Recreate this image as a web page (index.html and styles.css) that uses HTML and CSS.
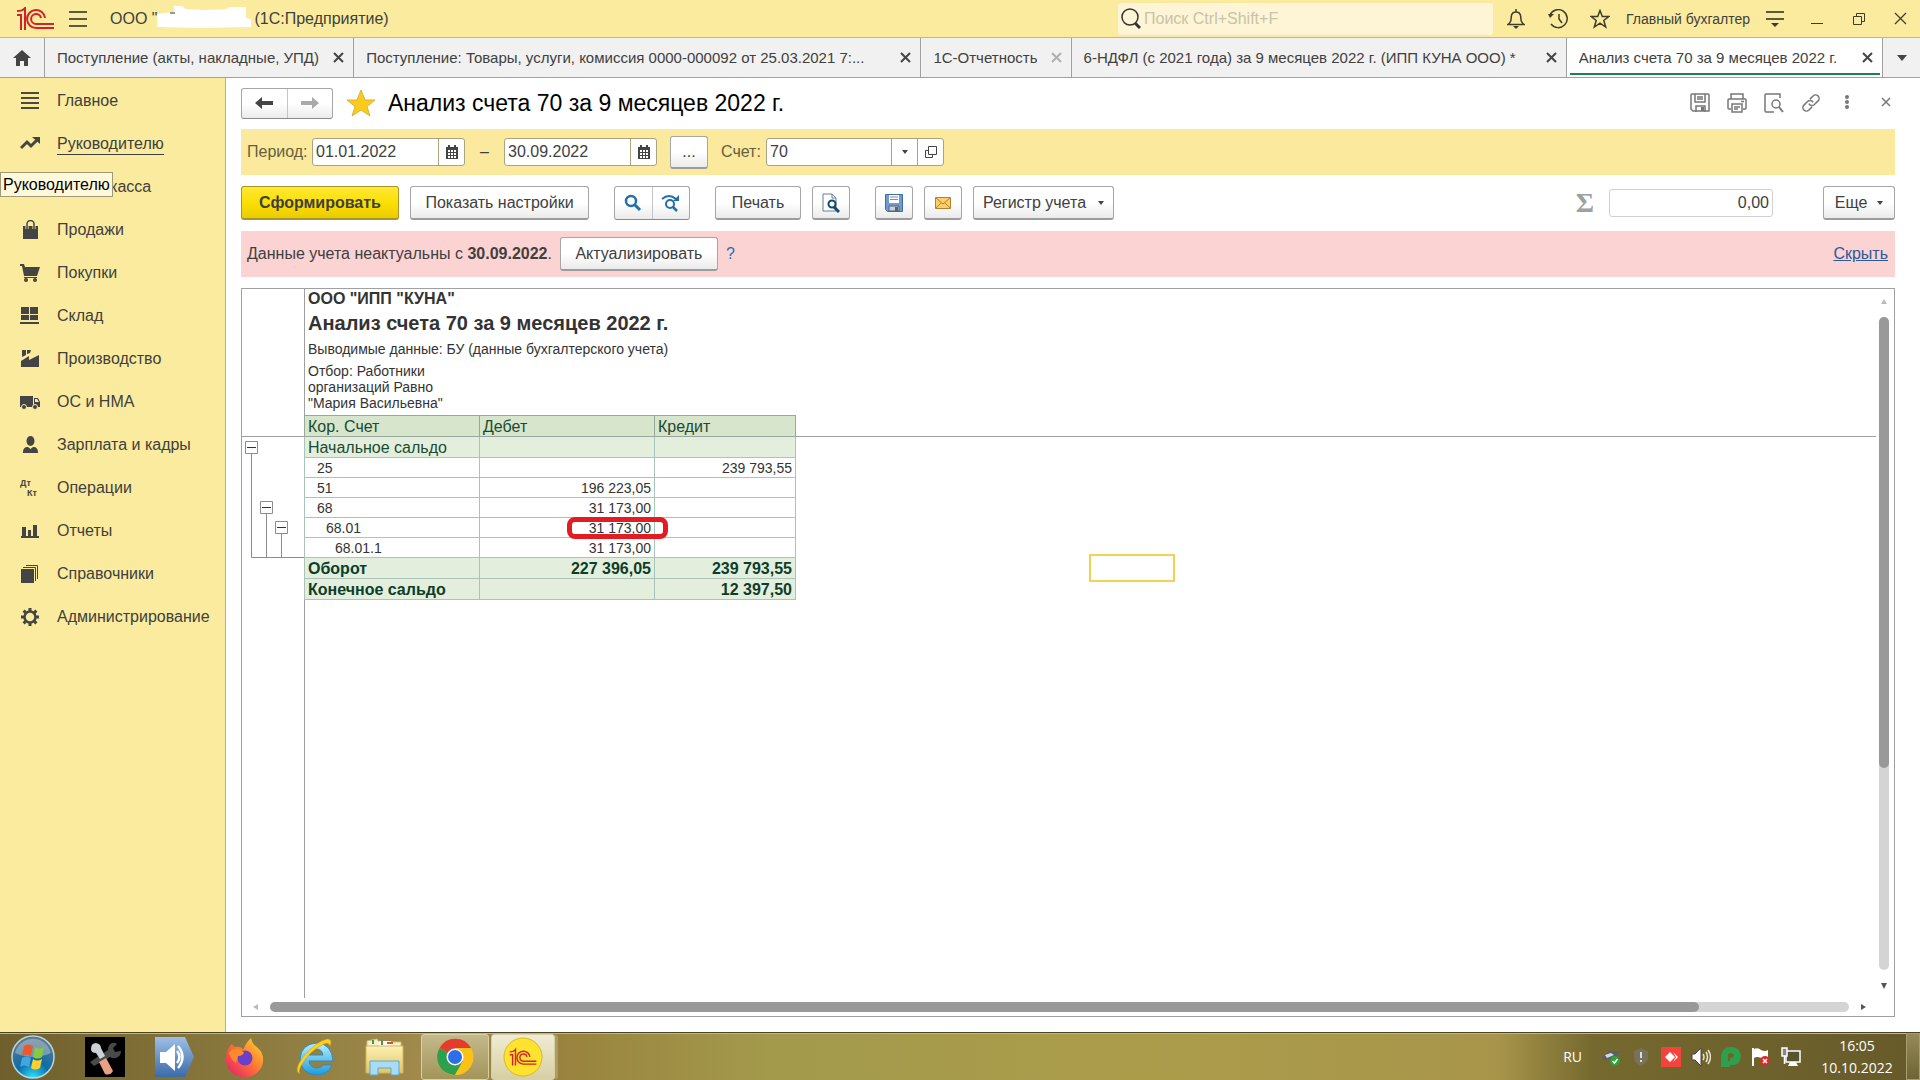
FILE: index.html
```html
<!DOCTYPE html>
<html lang="ru">
<head>
<meta charset="utf-8">
<title>Анализ счета 70 за 9 месяцев 2022 г.</title>
<link rel="stylesheet" href="styles.css">
</head>
<body>
<svg class="defs" aria-hidden="true">
  <defs>
    <g id="logo-1c">
      <path d="M1 8h4v15M1 4q6 0 8-3v22" fill="none" stroke="#d2232a" stroke-width="2"/>
      <path d="M29 11A9 9 0 1 0 20 21H38M25 11A5 5 0 1 0 20 17H38" fill="none" stroke="#d2232a" stroke-width="2"/>
    </g>
    <g id="calendar" fill="#444">
      <path d="M1 2h12v12H1z"/><path d="M3 0h2v3H3zM9 0h2v3H9z"/>
      <path d="M3 5h2v2H3zM6 5h2v2H6zM9 5h2v2H9zM3 8h2v2H3zM6 8h2v2H6zM9 8h2v2H9zM3 11h2v2H3zM6 11h2v2H6zM9 11h2v2H9z" fill="#fff"/>
    </g>
    <path id="cross" d="M1 1l9 9M10 1l-9 9" fill="none"/>
    <linearGradient id="blue" x1="0" y1="0" x2="0" y2="1"><stop offset="0" stop-color="#9dbfe6"/><stop offset="1" stop-color="#3b6ba8"/></linearGradient>
    <radialGradient id="orb" cx=".5" cy="1" r=".9"><stop offset="0" stop-color="#2fe6ff"/><stop offset=".45" stop-color="#0b6da8"/><stop offset="1" stop-color="#5a7890"/></radialGradient>
    <linearGradient id="fox" x1="1" y1="0" x2="0" y2="1"><stop offset="0" stop-color="#ffe226"/><stop offset=".5" stop-color="#ff7139"/><stop offset="1" stop-color="#e3156d"/></linearGradient>
    <linearGradient id="ie" x1="0" y1="0" x2="0" y2="1"><stop offset="0" stop-color="#b9efff"/><stop offset="1" stop-color="#1d9bdc"/></linearGradient>
    <linearGradient id="folder" x1="0" y1="0" x2="0" y2="1"><stop offset="0" stop-color="#fbf0b4"/><stop offset="1" stop-color="#e3c667"/></linearGradient>
  </defs>
</svg>

<header class="titlebar">
  <svg class="logo" width="38" height="24" viewBox="0 0 38 24"><use href="#logo-1c"/></svg>
  <button class="plain burger" aria-label="Меню"><svg width="18" height="16" viewBox="0 0 18 16"><path d="M0 1h18M0 8h18M0 15h18" stroke="#5c5842" stroke-width="2"/></svg></button>
  <span class="org">ООО "</span>
  <svg class="redacted" width="94" height="22" viewBox="0 0 94 22"><path d="M0 8 17 6V0h8l4 3 20 1 20-1 4-2h16v11l5 1v8l-50 1-44-1z" fill="#fff"/><path d="M13 7h5" stroke="#333" stroke-width="1"/></svg>
  <span class="app">(1С:Предприятие)</span>
  <label class="search">
    <svg width="20" height="22" viewBox="0 0 20 22"><circle cx="9" cy="9" r="8" fill="none" stroke="#333" stroke-width="1.500"/><path d="M14 15l5 5" stroke="#333" stroke-width="3"/></svg>
    <input type="text" placeholder="Поиск Ctrl+Shift+F" aria-label="Поиск">
  </label>
  <button class="plain tb-icon" aria-label="Уведомления"><svg width="18" height="20" viewBox="0 0 18 20"><path d="M1 15.500h16c-3-2.500-3-4-3.300-8C13.400 4 11.500 3 9 3S4.600 4 4.300 7.500C4 11.500 4 13 1 15.500zM9 0v3" fill="none" stroke="#3f3c2c" stroke-width="1.500"/><path d="M6 17h6l-3 3z" fill="#3f3c2c"/></svg></button>
  <button class="plain tb-icon" aria-label="История"><svg width="20" height="20" viewBox="0 0 20 20"><path d="M2 6a9 9 0 1 1 1 9M11 5v5l3 4" fill="none" stroke="#3f3c2c" stroke-width="1.500"/><path d="M0 5l6 0-4 4z" fill="#3f3c2c"/></svg></button>
  <button class="plain tb-icon" aria-label="Избранное"><svg width="20" height="20" viewBox="0 0 20 20"><path d="M10 1.500l2.300 6h6.500l-5 4 1.900 6.500-5.700-3.800L4.300 18l1.900-6.500-5-4h6.500z" fill="none" stroke="#3f3c2c" stroke-width="1.500"/></svg></button>
  <span class="user">Главный бухгалтер</span>
  <button class="plain tb-menu" aria-label="Сервис"><svg width="18" height="18" viewBox="0 0 18 18"><path d="M0 2h18M0 9h18" stroke="#5c5842" stroke-width="2"/><path d="M5 13h8l-4 4z" fill="#3f3c2c"/></svg></button>
  <button class="plain tb-win" aria-label="Свернуть"><svg width="12" height="12" viewBox="0 0 12 12"><path d="M0 10.500h12" stroke="#3f3c2c" stroke-width="1"/></svg></button>
  <button class="plain tb-win" aria-label="Развернуть"><svg width="12" height="12" viewBox="0 0 12 12"><path d="M.500 3.500h8v8h-8zM3.500 3V.500h8v8H9" fill="none" stroke="#3f3c2c" stroke-width="1"/></svg></button>
  <button class="plain tb-win" aria-label="Закрыть"><svg width="13" height="13" viewBox="0 0 13 13"><path d="M1 1l11 11M12 1L1 12" stroke="#3f3c2c" stroke-width="1.200"/></svg></button>
</header>

<nav class="tabs">
  <a class="tab home" href="#" aria-label="Начальная страница"><svg width="18" height="16" viewBox="0 0 18 16"><path d="M9 0l9 8h-3v8h-4v-5H7v5H3V8H0z" fill="#444"/></svg></a>
  <div class="tab tab-a"><a href="#">Поступление (акты, накладные, УПД)</a><button class="plain close" aria-label="Закрыть вкладку"><svg width="11" height="11"><use href="#cross"/></svg></button></div>
  <div class="tab tab-b"><a href="#">Поступление: Товары, услуги, комиссия 0000-000092 от 25.03.2021 7:...</a><button class="plain close" aria-label="Закрыть вкладку"><svg width="11" height="11"><use href="#cross"/></svg></button></div>
  <div class="tab tab-c"><a href="#">1С-Отчетность</a><button class="plain close dim" aria-label="Закрыть вкладку"><svg width="11" height="11"><use href="#cross"/></svg></button></div>
  <div class="tab tab-d"><a href="#">6-НДФЛ (с 2021 года) за 9 месяцев 2022 г. (ИПП КУНА ООО) *</a><button class="plain close" aria-label="Закрыть вкладку"><svg width="11" height="11"><use href="#cross"/></svg></button></div>
  <div class="tab tab-e active"><a href="#">Анализ счета 70 за 9 месяцев 2022 г.</a><button class="plain close" aria-label="Закрыть вкладку"><svg width="11" height="11"><use href="#cross"/></svg></button></div>
  <button class="plain more-tabs" aria-label="Все вкладки"><svg width="10" height="6"><path d="M0 0h10L5 6z" fill="#444"/></svg></button>
</nav>

<div class="workspace">
  <nav class="sidebar">
    <a href="#"><svg viewBox="0 0 20 20"><path d="M1 2h18M1 7h18M1 12h18M1 17h18" stroke="#4b4a3c" stroke-width="2"/></svg><span>Главное</span></a>
    <a href="#" class="hover"><svg viewBox="0 0 20 20"><path d="M1 14l6-6 4 4 6-6" fill="none" stroke="#444" stroke-width="3"/><path d="M12 3h8v7z" fill="#444"/></svg><span>Руководителю</span></a>
    <a href="#"><svg viewBox="0 0 20 20"><path d="M2 3h16v4H2zM2 9h16v8H2z" fill="#444"/></svg><span>Банк и касса</span></a>
    <a href="#"><svg viewBox="0 0 20 20"><path d="M3 6h15v13H3z" fill="#444"/><path d="M7 9V5a3 3 0 0 1 7 0v4" fill="none" stroke="#faeb9e" stroke-width="3"/><path d="M7 9V4a3 3 0 0 1 7 0v5" fill="none" stroke="#444" stroke-width="1.500"/></svg><span>Продажи</span></a>
    <a href="#"><svg viewBox="0 0 20 20"><path d="M0 1h4l1 3h15l-3 9H4L2 3H0zM4 14h13v1H4z" fill="#444"/><circle cx="6" cy="17" r="2" fill="#444"/><circle cx="15" cy="17" r="2" fill="#444"/></svg><span>Покупки</span></a>
    <a href="#"><svg viewBox="0 0 20 20"><path d="M1 1h8v7H1zM10 1h8v7h-8zM1 9h8v5H1zM10 9h8v5h-8zM0 16h19v2H0z" fill="#444"/></svg><span>Склад</span></a>
    <a href="#"><svg viewBox="0 0 20 20"><path d="M1 18v-6l8-5v4l10-5v12zM2 1h4v5L2 8zM7 1h4l-1 3-3 1z" fill="#444"/></svg><span>Производство</span></a>
    <a href="#"><svg viewBox="0 0 20 20"><path d="M0 4h13v11H0zM14 6h4l2 4v5h-6z" fill="#444"/><path d="M15 7h2l2 3h-4z" fill="#faeb9e"/><g fill="#444" stroke="#faeb9e"><circle cx="4" cy="15" r="2.500"/><circle cx="15" cy="15" r="2.500"/></g></svg><span>ОС и НМА</span></a>
    <a href="#"><svg viewBox="0 0 20 20"><ellipse cx="10.500" cy="6" rx="4" ry="5" fill="#444"/><path d="M3 18c0-5 2-6 5-6l2.500 2 2.500-2c3 0 5 1 5 6z" fill="#444"/></svg><span>Зарплата и кадры</span></a>
    <a href="#"><svg viewBox="0 0 20 20"><text x="0" y="8" class="dk">Дт</text><text x="7" y="18" class="dk">Кт</text></svg><span>Операции</span></a>
    <a href="#"><svg viewBox="0 0 20 20"><path d="M2 6h4v9H2zM8 9h3v6H8zM13 4h4v11h-4zM1 15h18v2H1z" fill="#444"/></svg><span>Отчеты</span></a>
    <a href="#"><svg viewBox="0 0 20 20"><path d="M1 5h13v14H1z" fill="#444"/><path d="M3 3.500h12.500V17M6 1.500h11.500V15" fill="none" stroke="#444"/></svg><span>Справочники</span></a>
    <a href="#"><svg viewBox="0 0 20 20"><circle cx="10" cy="10" r="5.500" fill="none" stroke="#444" stroke-width="2.500"/><path d="M10 1v3M10 16v3M1 10h3M16 10h3M3.600 3.600l2 2M14.400 14.400l2 2M3.600 16.400l2-2M14.400 5.600l2-2" stroke="#444" stroke-width="3"/></svg><span>Администрирование</span></a>
    <div class="tooltip" role="tooltip">Руководителю</div>
  </nav>

  <main class="form">
    <div class="form-head">
      <div class="pair">
        <button aria-label="Назад"><svg width="18" height="14" viewBox="0 0 18 14"><path d="M0 7l7-6v4h11v4H7v4z" fill="#444"/></svg></button>
        <button aria-label="Вперед"><svg width="18" height="14" viewBox="0 0 18 14"><path d="M18 7l-7-6v4H0v4h11v4z" fill="#aaa"/></svg></button>
      </div>
      <svg class="fav" width="30" height="28" viewBox="0 0 30 28"><path d="M15 1l4 10h10l-8 6.500L24 27l-9-6-9 6 3-9.500L1 11h10z" fill="#fbcb1c" stroke="#d9b43c"/></svg>
      <h1>Анализ счета 70 за 9 месяцев 2022 г.</h1>
      <div class="head-tools">
        <button class="plain" aria-label="Сохранить"><svg width="20" height="20" viewBox="0 0 20 20"><path d="M1 2q0-1 1-1h16q1 0 1 1v16H3l-2-2zM5 1v8h10V1M6 19v-6h9v6M7 4h6M7 6h6" fill="none" stroke="#777" stroke-width="1.500"/><path d="M11 14h3v4h-3z" fill="#777"/></svg></button>
        <button class="plain" aria-label="Печать"><svg width="20" height="20" viewBox="0 0 20 20"><path d="M4 6V1h12v5M4 16H2q-1 0-1-1V7q0-1 1-1h16q1 0 1 1v8q0 1-1 1h-2M5 11h10v8H5zM7 14h6M7 16h4M14 8.500h3" fill="none" stroke="#777" stroke-width="1.500"/></svg></button>
        <button class="plain" aria-label="Просмотр"><svg width="20" height="20" viewBox="0 0 20 20"><path d="M16 5V1H2Q1 1 1 2v16q0 1 1 1h8" fill="none" stroke="#777" stroke-width="1.500"/><circle cx="12" cy="11" r="4" fill="none" stroke="#777" stroke-width="1.500"/><path d="M15 14l4 5" stroke="#777" stroke-width="2"/></svg></button>
        <button class="plain" aria-label="Ссылка"><svg width="20" height="20" viewBox="0 0 20 20"><g transform="rotate(-45 10 10)" fill="none" stroke="#777" stroke-width="1.500"><path d="M8 13.500H3.500a3.500 3.500 0 0 1 0-7H9a3.500 3.500 0 0 1 3 4.500"/><path d="M12 6.500h4.500a3.500 3.500 0 0 1 0 7H11A3.500 3.500 0 0 1 8 9"/></g></svg></button>
        <button class="plain" aria-label="Дополнительно"><svg width="20" height="20" viewBox="0 0 20 20"><g fill="#777"><circle cx="9" cy="4" r="2"/><circle cx="9" cy="9" r="2"/><circle cx="9" cy="14" r="2"/></g></svg></button>
        <button class="plain" aria-label="Закрыть"><svg width="20" height="20" viewBox="0 0 20 20"><path d="M7 5l8 8M15 5l-8 8" stroke="#777" stroke-width="1.500"/></svg></button>
      </div>
    </div>

    <div class="period">
      <label for="from">Период:</label>
      <div class="field date"><input id="from" type="text" value="01.01.2022"><button class="plain" aria-label="Выбрать дату"><svg width="14" height="14"><use href="#calendar"/></svg></button></div>
      <span class="dash">–</span>
      <div class="field date"><input type="text" value="30.09.2022" aria-label="Конец периода"><button class="plain" aria-label="Выбрать дату"><svg width="14" height="14"><use href="#calendar"/></svg></button></div>
      <button class="btn dots">...</button>
      <label for="account">Счет:</label>
      <div class="field account"><input id="account" type="text" value="70"><button class="plain" aria-label="Список"><svg width="6" height="4"><path d="M0 0h6L3 4z" fill="#444"/></svg></button><button class="plain" aria-label="Открыть"><svg width="12" height="12" viewBox="0 0 12 12"><path d="M3.500.500h8v8h-8zM3.500 4.500h-3v7h7v-3" fill="none" stroke="#444"/></svg></button></div>
    </div>

    <div class="toolbar">
      <button class="btn primary">Сформировать</button>
      <button class="btn settings">Показать настройки</button>
      <div class="pair tall">
        <button aria-label="Найти"><svg width="18" height="18" viewBox="0 0 18 18"><circle cx="7" cy="7" r="5" fill="none" stroke="#2470a8" stroke-width="2.500"/><path d="M11 11l5 5" stroke="#2470a8" stroke-width="3"/></svg></button>
        <button aria-label="Найти далее"><svg width="20" height="20" viewBox="0 0 20 20"><circle cx="9" cy="11" r="4" fill="none" stroke="#2470a8" stroke-width="2"/><path d="M12 14l4 4" stroke="#2470a8" stroke-width="2.500"/><path d="M1 6q7-6 14 0" fill="none" stroke="#2470a8" stroke-width="2"/><path d="M18 2v6h-6z" fill="#2470a8"/></svg></button>
      </div>
      <button class="btn print">Печать</button>
      <button class="btn icon preview" aria-label="Предварительный просмотр"><svg width="18" height="20" viewBox="0 0 18 20"><path d="M1 1h9l4 4v13H1zM10 1v4h4" fill="#fff" stroke="#6b7f94"/><circle cx="10" cy="11" r="3.500" fill="#fff" stroke="#0f4a78" stroke-width="2"/><path d="M12 14l5 5" stroke="#0f4a78" stroke-width="3"/></svg></button>
      <button class="btn icon save" aria-label="Сохранить отчет"><svg width="18" height="18" viewBox="0 0 18 18"><path d="M.500.500h17v17h-15l-2-2z" fill="#6f9bd0" stroke="#3d6ea8"/><path d="M4 1h10v8H4z" fill="#fff"/><path d="M5 3h8M5 5.500h8" stroke="#88a"/><path d="M4 12h10v5H4z" fill="#c9cfd6" stroke="#52657a"/><path d="M10 13h3v4h-3z" fill="#52657a"/></svg></button>
      <button class="btn icon mail" aria-label="Отправить"><svg width="16" height="12" viewBox="0 0 16 12"><path d="M.500.500h15v11H.500z" fill="#fbcf6b" stroke="#b8802a"/><path d="M1 1l7 6 7-6M1 11l5-5M15 11l-5-5" fill="none" stroke="#b8802a"/></svg></button>
      <button class="btn register">Регистр учета<svg width="6" height="4"><path d="M0 0h6L3 4z" fill="#444"/></svg></button>
      <label class="sum" for="sum">Σ</label>
      <input class="sum-value" id="sum" type="text" value="0,00">
      <button class="btn else">Еще<svg width="6" height="4"><path d="M0 0h6L3 4z" fill="#444"/></svg></button>
    </div>

    <div class="notice">
      <span>Данные учета неактуальны с <b>30.09.2022</b>.</span>
      <button class="btn">Актуализировать</button>
      <a class="help" href="#">?</a>
      <a class="hide" href="#">Скрыть</a>
    </div>

    <section class="sheet">
      <div class="view">
        <div class="grid">
          <div class="gutter-top"></div>
          <div class="gutter">
            <svg width="62" height="122" viewBox="0 0 62 122"><g fill="none" stroke="#8c8c8c"><path d="M9.500 16v104.500H62M24.500 77v43M39.500 97v23"/><path d="M3.500 4.500h12v12h-12zM18.500 64.500h12v12h-12zM33.500 84.500h12v12h-12z" fill="#fff"/></g><path d="M5 10.500h9M20 70.500h9M35 90.500h9" stroke="#333"/></svg>
          </div>
          <div class="report">
            <div class="report-head">
              <div class="company">ООО "ИПП "КУНА"</div>
              <h2>Анализ счета 70 за 9 месяцев 2022 г.</h2>
              <p>Выводимые данные: БУ (данные бухгалтерского учета)</p>
              <p class="filter">Отбор: Работники организаций Равно "Мария Васильевна"</p>
            </div>
            <table>
              <thead><tr><th class="c1">Кор. Счет</th><th class="c2">Дебет</th><th class="c3">Кредит</th></tr></thead>
              <tbody>
                <tr class="group"><td>Начальное сальдо</td><td></td><td></td></tr>
                <tr><td class="l1">25</td><td></td><td>239 793,55</td></tr>
                <tr><td class="l1">51</td><td>196 223,05</td><td></td></tr>
                <tr><td class="l1">68</td><td>31 173,00</td><td></td></tr>
                <tr><td class="l2">68.01</td><td class="marked">31 173,00<i class="mark"></i></td><td></td></tr>
                <tr><td class="l3">68.01.1</td><td>31 173,00</td><td></td></tr>
              </tbody>
              <tfoot>
                <tr class="total"><td>Оборот</td><td>227 396,05</td><td>239 793,55</td></tr>
                <tr class="total"><td>Конечное сальдо</td><td></td><td>12 397,50</td></tr>
              </tfoot>
            </table>
          </div>
          <div class="rest-top"></div>
          <i class="cursor"></i>
        </div>
        <div class="vscroll">
          <svg width="6" height="5"><path d="M0 5h6L3 0z" fill="#bbb"/></svg>
          <div class="track"><div class="thumb"></div></div>
          <svg width="6" height="6"><path d="M0 0h6L3 6z" fill="#555"/></svg>
        </div>
      </div>
      <div class="hscroll">
        <svg width="5" height="6"><path d="M5 0v6L0 3z" fill="#bbb"/></svg>
        <div class="track"><div class="thumb"></div></div>
        <svg width="5" height="6"><path d="M0 0v6l5-3z" fill="#555"/></svg>
      </div>
    </section>
  </main>
</div>

<footer class="taskbar">
  <button class="plain start" aria-label="Пуск"><svg width="44" height="44" viewBox="0 0 44 44"><circle cx="22" cy="22" r="21" fill="url(#orb)" stroke="#b8d4e0" stroke-width="1.500"/><path d="M4 18a18.500 18.500 0 0 1 36 0q-18 8-36 0z" fill="#fff" opacity=".3"/><path d="M13 11q4-3 9 0l-2 10q-4-3-9 0z" fill="#f0562a"/><path d="M24 12q4 3 9 0l-2 10q-5 3-9 0z" fill="#8cc83c"/><path d="M11 23q4-3 9 0l-2 9q-5-3-9 0z" fill="#42a5e0"/><path d="M22 24q4 3 9 0l-2 9q-5 3-9 0z" fill="#fcd12e"/></svg></button>
  <button class="plain app-icon" aria-label="Инструменты"><svg width="40" height="40" viewBox="0 0 40 40"><path d="M0 0h40v40H0z" fill="#000"/><path d="M5 25l18-12c0-6 5-9 9-6l-4 4 2 4 6-1c0 6-6 9-11 6L9 29z" fill="#4a4a4a"/><path d="M6 12q0-6 5-6 5 1 5 5l4 8-5 3-4-6q-5 0-5-4z" fill="#cdd0d4"/><path d="M14 25l7-4 7 13q-3 5-8 3z" fill="#e8a184"/></svg></button>
  <button class="plain app-icon" aria-label="Звук"><svg width="40" height="40" viewBox="0 0 40 40"><path d="M0 0h30l9 20-9 20H0z" fill="url(#blue)"/><path d="M5 15h6l9-8v27l-9-8H5z" fill="#fff"/><path d="M22 14q5 6 0 12M23 9q9 11 0 22" fill="none" stroke="#fff" stroke-width="2.500"/></svg></button>
  <button class="plain app-icon" aria-label="Firefox"><svg width="40" height="40" viewBox="0 0 40 40"><path d="M1 20Q2 11 7 7q1 3 3 3 6-1 8 3 4-9 8-12 1 6 7 10 6 6 5 13a18 16 0 0 1-37-1z" fill="url(#fox)"/><circle cx="20" cy="21" r="7.500" fill="#6b3fc8"/><path d="M4 16q4-6 10-3l5 2q-1 4-6 4l-2 7q-5-3-7-10z" fill="#ff8a2a"/></svg></button>
  <button class="plain app-icon" aria-label="Internet Explorer"><svg width="40" height="40" viewBox="0 0 40 40"><path d="M38 24H14q1 7 8 7 4 0 6-3h9q-4 10-15 10Q6 37 5 22 6 7 22 6q15 1 16 18zM14 18h14q-1-6-7-6-6 1-7 6z" fill="url(#ie)" stroke="#2a8cc4"/><path d="M5 37Q-2 34 8 20 20 5 32 2q6 0 3 7-1-4-6-2Q14 14 6 29q-3 6-1 8z" fill="#fad122" stroke="#c89a18" stroke-width=".500"/></svg></button>
  <button class="plain app-icon" aria-label="Проводник"><svg width="40" height="40" viewBox="0 0 40 40"><path d="M2 4l10-2 2 3h22v6H2z" fill="#f7efca" stroke="#d4bd6a"/><path d="M14 4h12v5H14z" fill="#fff"/><path d="M7 3h2v4H7zM16 4h2v4h-2z" fill="#3a9a5a"/><path d="M22 5h6v2h-6z" fill="#d8542a"/><path d="M1 9h37v27H1z" fill="url(#folder)" stroke="#d4b45a"/><path d="M5 38V24h29v14h-8v-7H13v7z" fill="#a9dcf2" stroke="#5aa8d4"/></svg></button>
  <button class="plain running" aria-label="Chrome"><svg width="40" height="40" viewBox="0 0 40 40"><circle cx="20" cy="20" r="18" fill="#fbc116"/><path d="M20 20L4.500 11A18 18 0 0 1 36 11H20z" fill="#e33b2e"/><path d="M4.500 11A18 18 0 0 0 20 38l8-14-8-4z" fill="#2da04e"/><path d="M20 11h16A18 18 0 0 1 20 38l8-14z" fill="#fbc116"/><circle cx="20" cy="20" r="8.500" fill="#fff"/><circle cx="20" cy="20" r="7" fill="#2c6fe8"/></svg></button>
  <button class="plain running current" aria-label="1С:Предприятие"><svg width="40" height="40" viewBox="0 0 40 40"><circle cx="20" cy="20" r="19" fill="#ffe32e" stroke="#d8b820"/><g transform="translate(6 12) scale(.720)"><use href="#logo-1c"/></g></svg></button>
  <div class="tray">
    <span class="lang">RU</span>
    <svg width="20" height="20" viewBox="0 0 20 20"><path d="M1 11L9 4l10 0-6 7-10 2z" fill="#59606c"/><path d="M4 8l6-2 3 2-7 3z" fill="#d4dae4"/><circle cx="14" cy="14" r="5" fill="#2fa03a"/><path d="M11.500 14l2 2 3-4" fill="none" stroke="#fff" stroke-width="1.500"/></svg>
    <svg width="20" height="20" viewBox="0 0 20 20"><path d="M10 1l7 3v6q0 6-7 9-7-3-7-9V4z" fill="#77735a"/><path d="M9 5h2v6H9zM9 13h2v2H9z" fill="#ddd"/></svg>
    <svg width="20" height="20" viewBox="0 0 20 20"><path d="M0 0h20v20H0z" fill="#f4433a"/><path d="M4 10l5-5 5 5-5 5zM12 5l5 5-5 5 3-5z" fill="#fff"/></svg>
    <svg width="20" height="20" viewBox="0 0 20 20"><path d="M1 7h3l6-6v18l-6-6H1z" fill="#fff" stroke="#444"/><path d="M12 7q2 3 0 6M15 5q3 5 0 10M17 3q5 7 0 14" fill="none" stroke="#e8e4cc" stroke-width="1.500"/></svg>
    <svg width="20" height="20" viewBox="0 0 20 20"><path d="M0 20V9Q1 0 10 0t10 9q-1 9-8 9H9v2zM7 7v7h2v-3q4 0 4-3-1-3-6-1z" fill="#2fa04a" fill-rule="evenodd"/></svg>
    <svg width="20" height="20" viewBox="0 0 20 20"><path d="M2 1v18" stroke="#fff" stroke-width="2"/><path d="M3 2q4-2 7 1 4 2 7 0v9q-4 2-7-1-4-2-7 0z" fill="#fff"/><circle cx="14" cy="14" r="5" fill="#d82a2a"/><path d="M12 12l4 4M16 12l-4 4" stroke="#fff" stroke-width="1.500"/></svg>
    <svg width="20" height="20" viewBox="0 0 20 20"><path d="M5 4h14v11H5z" fill="#56542f" stroke="#fff" stroke-width="1.500"/><path d="M9 15h6l2 4H7z" fill="#fff"/><path d="M1 1h5v8H1zM3.500 9v8" fill="#888" stroke="#fff" stroke-width="1.500"/></svg>
    <div class="clock"><span>16:05</span><span>10.10.2022</span></div>
  </div>
  <button class="plain desktop" aria-label="Показать рабочий стол"></button>
</footer>
</body>
</html>
```
FILE: styles.css
```css
* { box-sizing: border-box; }

body {
  margin: 0;
  min-height: 100vh;
  display: flex;
  flex-direction: column;
  font: 16px/20px "Liberation Sans", Arial, sans-serif;
  color: #404040;
  background: #fff;
}

button, input { font: inherit; color: inherit; margin: 0; }
a { color: inherit; text-decoration: none; }
h1, h2, p { margin: 0; }
svg { flex: none; display: block; }
.defs { position: absolute; width: 0; height: 0; }
.plain {
  padding: 0;
  border: 0;
  background: none;
  display: flex;
  align-items: center;
  justify-content: center;
}

/* title bar */
.titlebar {
  display: flex;
  align-items: center;
  height: 38px;
  padding-left: 16px;
  background: #faeb9e;
  border-bottom: 1px solid #c9b96c;
}
.burger { margin: 0 23px 0 15px; }
.redacted { margin: 0 3px 4px 0; }
.search {
  display: flex;
  align-items: center;
  width: 375px;
  height: 32px;
  margin-left: auto;
  padding-left: 3px;
  gap: 3px;
  background: #fdf5d5;
  border-radius: 3px;
}
.search input { flex: 1; min-width: 0; padding: 0; border: 0; background: none; outline: 0; }
.search input::placeholder { color: #c9c3a8; opacity: 1; }
.tb-icon { width: 42px; }
.search + .tb-icon { margin-left: 2px; }
.user { margin-left: 5px; font-size: 14px; }
.tb-menu { margin: 0 12px 0 16px; }
.tb-win { width: 42px; }
.tb-win:last-child { width: 40px; }

/* open window tabs */
.tabs {
  display: flex;
  height: 40px;
  font-size: 15px;
  background: #f1f1f1;
  border-bottom: 1px solid #a0a0a0;
}
.tab {
  display: flex;
  align-items: center;
  justify-content: space-between;
  min-width: 0;
  padding: 0 9px 0 12px;
  border-right: 1px solid #a0a0a0;
}
.tab a { overflow: hidden; white-space: nowrap; }
.tab.home { width: 45px; flex: none; padding: 0; justify-content: center; }
.tab-a { flex: 1 1 309px; }
.tab-b { flex: 1 1 567px; }
.tab-c { flex: 1 1 150px; }
.tab-d { flex: 1 1 495px; }
.tab-e { flex: 1 1 316px; }
.tab.active { position: relative; background: #fff; }
.tab.active::after {
  content: "";
  position: absolute;
  left: 3px;
  right: 2px;
  bottom: 2px;
  height: 2px;
  background: #1f7f52;
}
.close { flex: none; stroke: #444; stroke-width: 2; }
.close.dim { stroke: #b0b0b0; }
.more-tabs { width: 37px; flex: none; }

/* sections panel */
.workspace { flex: 1; display: flex; }
.sidebar {
  position: relative;
  flex: none;
  width: 226px;
  padding-top: 1px;
  background: #faeb9e;
  border-right: 1px solid #b9b183;
}
.sidebar a {
  display: flex;
  align-items: center;
  gap: 17px;
  height: 43px;
  padding-left: 20px;
}
.sidebar svg { width: 20px; height: 20px; }
.sidebar .hover span { box-shadow: 0 1px 0 #404040; }
.dk { font-size: 9px; font-weight: bold; fill: #444; }
.tooltip {
  position: absolute;
  left: 0;
  top: 94px;
  height: 25px;
  padding: 0 2px;
  line-height: 23px;
  color: #000;
  background: #fff9dc;
  border: 1px solid #a09a78;
}

/* report form */
.form {
  flex: 1;
  min-width: 0;
  display: flex;
  flex-direction: column;
  padding: 9px 25px 15px 15px;
}
.form-head { display: flex; align-items: center; height: 32px; }
.pair {
  display: flex;
  height: 31px;
  width: 92px;
  border: 1px solid #a6a6a6;
  border-bottom-color: #8a8a8a;
  border-radius: 3px;
  background: linear-gradient(#fff 50%, #ebebeb);
}
.pair button {
  flex: 1;
  display: flex;
  align-items: center;
  justify-content: center;
  padding: 0;
  border: 0;
  background: none;
}
.pair button + button { border-left: 1px solid #c4c4c4; }
.pair.tall { width: 76px; height: 34px; margin-right: 14px; }
.fav { margin: 0 12px 0 13px; }
h1 { font-size: 23px; font-weight: normal; line-height: 28px; color: #000; }
.head-tools { display: flex; margin-left: auto; gap: 17px; }

.period {
  display: flex;
  align-items: center;
  height: 46px;
  margin-top: 10px;
  padding-left: 6px;
  background: #fbe99d;
}
.field {
  display: flex;
  height: 28px;
  background: #fff;
  border: 1px solid #a9a37f;
  border-radius: 3px;
}
.field input { flex: 1; min-width: 0; padding: 0 3px; border: 0; background: none; }
.field button { width: 26px; border-left: 1px solid #a9a37f; }
.field.date { width: 153px; }
.field.account { width: 178px; }
.period label { width: 65px; color: #66603f; }
.dash { width: 39px; text-align: center; }
.period .dots { width: 38px; height: 33px; margin: 0 13px; padding: 0; }
.period .dots + label { width: 45px; }

.toolbar { display: flex; align-items: center; gap: 11px; margin-top: 11px; }
.btn {
  display: flex;
  align-items: center;
  justify-content: center;
  height: 34px;
  padding: 0 16px;
  border: 1px solid #a6a6a6;
  border-bottom: 2px solid #9c9c9c;
  border-radius: 3px;
  background: linear-gradient(#fff 50%, #ebebeb);
  white-space: nowrap;
}
.btn.primary {
  width: 158px;
  padding: 0;
  font-weight: bold;
  background: linear-gradient(#ffe932, #fbdc00 60%, #e8cc00);
  border-color: #a8942a;
}
.settings { width: 179px; margin-right: 14px; }
.print { width: 86px; }
.btn.icon { width: 38px; padding: 0; }
.preview { margin-right: 14px; }
.register { gap: 12px; width: 141px; padding: 0; }
.sum { margin-left: auto; font: bold 28px/28px "Liberation Serif", serif; color: #a0a0a0; }
.sum-value {
  width: 164px;
  height: 28px;
  margin: 0 39px 0 4px;
  padding: 0 3px;
  text-align: right;
  border: 1px solid #d0d0d0;
  border-radius: 3px;
}
.else { gap: 10px; width: 72px; padding: 0; }

.notice {
  display: flex;
  align-items: center;
  height: 46px;
  margin-top: 11px;
  padding: 0 7px 0 6px;
  background: #fbd3d3;
}
.notice .btn { width: 158px; margin: 0 8px; padding: 0; }
.help { color: #1f6fb8; }
.hide { margin-left: auto; color: #2a5a9a; text-decoration: underline; }

/* spreadsheet */
.sheet {
  flex: 1;
  display: flex;
  flex-direction: column;
  margin-top: 11px;
  border: 1px solid #a0a0a0;
}
.view { flex: 1; display: flex; }
.grid {
  position: relative;
  flex: 1;
  display: grid;
  grid-template-columns: 62px 492px 1fr;
  grid-template-rows: 148px 1fr;
}
.gutter-top { grid-area: 1 / 1; border-bottom: 1px solid #a0a0a0; }
.gutter { grid-area: 2 / 1; }
.rest-top { grid-area: 1 / 3; border-bottom: 1px solid #a0a0a0; }
.report { grid-area: 1 / 2 / 3 / 3; border-left: 1px solid #a0a0a0; color: #333; }
.report-head { height: 126px; padding-left: 3px; font-size: 14px; line-height: 16px; }
.company { font-size: 16px; line-height: 20px; font-weight: bold; }
h2 { font-size: 20px; line-height: 28px; white-space: nowrap; }
.report-head p { padding-top: 4px; }
.report-head .filter { width: 150px; padding-top: 6px; }
table {
  width: 492px;
  margin-left: -1px;
  border-collapse: collapse;
  table-layout: fixed;
  font-size: 14px;
  line-height: 18px;
}
th, td { height: 20px; padding: 0 3px; border: 1px solid #abc4b9; text-align: right; }
th { height: 21px; padding-top: 2px; text-align: left; font-weight: normal; font-size: 16px; background: #d6e5cc; color: #1b4a33; border-color: #98a89c; }
.c1, .c2 { width: 175px; }
td:first-child { text-align: left; }
.l1 { padding-left: 12px; }
.l2 { padding-left: 21px; }
.l3 { padding-left: 30px; }
.group td { height: 21px; padding-top: 2px; font-size: 16px; background: #e3efdc; color: #1b4a33; }
.total td { height: 21px; padding-top: 2px; font-size: 16px; font-weight: bold; background: #e3efdc; color: #0d3d2a; }
.marked { position: relative; }
.mark {
  position: absolute;
  left: 87px;
  top: -1px;
  width: 101px;
  height: 22px;
  border: 5px solid #e31b23;
  border-radius: 8px;
}
.cursor {
  position: absolute;
  left: 847px;
  top: 265px;
  width: 86px;
  height: 28px;
  border: 2px solid #f2d24e;
}

.vscroll {
  display: flex;
  flex-direction: column;
  align-items: center;
  gap: 13px;
  width: 18px;
  padding: 10px 2px 9px 0;
}
.vscroll .track { flex: 1; width: 10px; }
.track { background: #d4d4d4; border-radius: 5px; }
.thumb { background: #999; border-radius: 5px; }
.vscroll .thumb { height: 69%; }
.hscroll {
  display: flex;
  align-items: center;
  gap: 12px;
  height: 18px;
  padding: 0 28px 0 11px;
}
.hscroll .track { flex: 1; height: 10px; }
.hscroll .thumb { width: 90.5%; height: 10px; }

/* taskbar */
.taskbar {
  display: flex;
  align-items: center;
  height: 48px;
  padding-left: 11px;
  border-top: 1px solid #4a4423;
  box-shadow: inset 0 1px 0 #c2b784;
  background: linear-gradient(90deg, #6e5f2c 0, #8d7c40 14%, #a08a4c 22%, #98803c 28%, #a39a4c 40%, #ab9c4a 60%, #a8954a 78%, #75692f 83%, #665a2a 100%);
}
.start { margin-right: 30px; }
.app-icon { margin-right: 30px; }
.running {
  width: 68px;
  height: 46px;
  margin-left: -14px;
  border: 1px solid #d8d0a8;
  border-radius: 3px;
  background: linear-gradient(#c4b98a, #a3945a);
}
.running.current {
  width: 64px;
  margin-left: 2px;
  background: linear-gradient(#f0ecd4, #d6cfa4);
  box-shadow: 4px 0 0 -1px #a89d68;
}
.tray {
  display: flex;
  align-items: center;
  gap: 10px;
  margin-left: auto;
  font-family: "Open Sans", "Noto Sans", sans-serif;
  font-size: 14px;
  color: #fff;
}
.lang { margin-right: 9px; }
.clock { display: flex; flex-direction: column; align-items: center; line-height: 22px; width: 72px; margin: 0 13px 0 10px; }
.desktop { width: 14px; height: 47px; border: 1px solid #a89d70; background: linear-gradient(#96895a, #6e6334); }
```
